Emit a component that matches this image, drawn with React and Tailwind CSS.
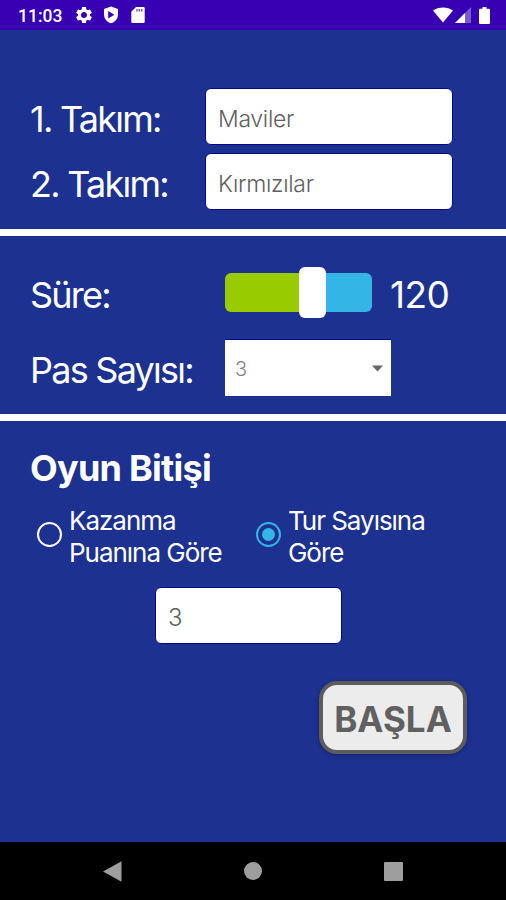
function StatusBar() {
  return (
    <header className="h-[30px] bg-[#3700b3] flex items-center justify-between pl-[18px] pr-[16px] text-white">
      <div className="flex items-center">
        <span className="w-[45px] font-['Roboto'] text-[17.5px] leading-[30px] font-medium whitespace-nowrap pt-[2px]">
          11:03
        </span>
        {/* Settings, play protect, sd card */}
        <svg className="ml-[11px] w-[20px] h-[20px]" viewBox="0 0 24 24" fill="currentColor">
          <path d="M19.14 12.94c.04-.3.06-.61.06-.94 0-.32-.02-.64-.07-.94l2.03-1.58a.49.49 0 0 0 .12-.61l-1.92-3.32a.49.49 0 0 0-.59-.22l-2.39.96c-.5-.38-1.03-.7-1.62-.94l-.36-2.54a.48.48 0 0 0-.48-.41h-3.84c-.24 0-.43.17-.47.41l-.36 2.54c-.59.24-1.13.57-1.62.94l-2.39-.96a.48.48 0 0 0-.59.22L2.74 8.87a.48.48 0 0 0 .12.61l2.03 1.58c-.05.3-.09.63-.09.94s.02.64.07.94l-2.03 1.58a.49.49 0 0 0-.12.61l1.92 3.32c.12.22.37.29.59.22l2.39-.96c.5.38 1.03.7 1.62.94l.36 2.54c.05.24.24.41.48.41h3.84c.24 0 .44-.17.47-.41l.36-2.54c.59-.24 1.13-.56 1.62-.94l2.39.96c.22.08.47 0 .59-.22l1.92-3.32a.48.48 0 0 0-.12-.61l-2.01-1.58zM12 15.6A3.61 3.61 0 0 1 8.4 12c0-1.98 1.62-3.6 3.6-3.6s3.6 1.62 3.6 3.6-1.62 3.6-3.6 3.6z" />
        </svg>
        <svg className="ml-[9px] w-[16px] h-[18px]" viewBox="0 0 16 18">
          <path d="M8 0.5l7 2.6v5.4c0 4.2-2.8 7.3-7 8.8-4.2-1.5-7-4.6-7-8.8V3.1z" fill="currentColor" />
          <path d="M5.2 5l6.2 3.7-6.2 3.7z" fill="#3700b3" />
        </svg>
        <svg className="ml-[12px] w-[14px] h-[16px]" viewBox="0 0 14 16">
          <path d="M5 0h7.5q1.2 0 1.2 1.2v13.6q0 1.2-1.2 1.2H1.5q-1.2 0-1.2-1.2V4.8z" fill="currentColor" />
          <path d="M5.2 2h1.4v2.500H5.2zM7.6 2H9v2.500H7.600zM10 2h1.4v2.500H10z" fill="#3700b3" opacity="0.7" />
        </svg>
      </div>
      {/* Wifi, signal, battery */}
      <div className="flex items-center">
        <svg className="w-[20px] h-[16px]" viewBox="0 0 20 16" fill="currentColor">
          <path d="M10 15.5L0 3.6C5.500-.6 14.500-.6 20 3.600z" />
        </svg>
        <svg className="ml-[2px] w-[16px] h-[16px]" viewBox="0 0 16 16" fill="currentColor">
          <path d="M0 16L16 0v16z" opacity="0.35" />
          <path d="M0 16L10 6V16z" />
        </svg>
        <svg className="ml-[8px] w-[11px] h-[17px]" viewBox="0 0 11 17" fill="currentColor">
          <path d="M3.5 0h4v1.800H10q1 0 1 1V16q0 1-1 1H1q-1 0-1-1V2.800q0-1 1-1h2.500z" />
        </svg>
      </div>
    </header>
  );
}

function TeamField({ label, name }) {
  return (
    <div className="flex items-center h-[57px]">
      <label className="w-[175px] text-[36px] font-normal tracking-[-1.75px] whitespace-nowrap pt-[4px]">
        {label}
      </label>
      <div className="w-[248px] h-[57px] rounded-[6px] bg-white text-[#606060] border border-[#06088a] flex items-center pl-[12px] pt-[5px] text-[23px] font-light tracking-[-0.3px]">
        {name}
      </div>
    </div>
  );
}

function Radio({ checked, children }) {
  return (
    <div className="flex items-start">
      <div
        className={`mt-[18px] w-[25px] h-[25px] shrink-0 rounded-full border-[2.5px] flex items-center justify-center ${
          checked ? "border-[#33b5e5]" : "border-white"
        }`}
      >
        {checked && <div className="w-[13px] h-[13px] rounded-full bg-[#33b5e5]" />}
      </div>
      <div className="ml-[7px] mt-px text-[26px] leading-[32px] tracking-[-1.03px] whitespace-nowrap">
        {children}
      </div>
    </div>
  );
}

function NavBar() {
  return (
    <nav className="h-[58px] bg-black flex items-center pl-[103px] text-[#9e9e9e]">
      <svg className="w-[19px] h-[21px]" viewBox="0 0 19 21" fill="currentColor">
        <path d="M18.5.3v20.400L0 10.500z" />
      </svg>
      <div className="ml-[122px] w-[18px] h-[18px] rounded-full bg-[#9e9e9e]" />
      <div className="ml-[122px] w-[19px] h-[19px] rounded-[1px] bg-[#9e9e9e]" />
    </nav>
  );
}

export default function App() {
  return (
    <div className="w-[506px] h-[900px] overflow-hidden flex flex-col bg-[#1d3190] text-white font-['Inter',sans-serif]">
      <StatusBar />

      {/* Teams */}
      <section className="h-[199px] pt-[58px] pl-[30px] flex flex-col gap-[8px]">
        <TeamField label="1. Takım:" name="Maviler" />
        <TeamField label="2. Takım:" name="Kırmızılar" />
      </section>
      <div className="h-[7px] shrink-0 bg-white" />

      {/* Round settings */}
      <section className="h-[178px] pt-[31px] pl-[30px]">
        <div className="flex items-center h-[51px]">
          <span className="w-[195px] text-[36px] tracking-[-1.8px] pt-[4px]">Süre:</span>
          <div className="flex items-center w-[147px]">
            <div className="w-[74px] h-[39px] rounded-l-[6px] bg-[#99cc00]" />
            <div className="w-[27px] h-[51px] rounded-[6px] bg-white" />
            <div className="w-[46px] h-[39px] rounded-r-[6px] bg-[#33b5e5]" />
          </div>
          <span className="ml-[18px] text-[37px] tracking-[-0.5px] pt-[4px]">120</span>
        </div>
        <div className="mt-[21px] flex items-center h-[57px]">
          <span className="w-[195px] text-[36px] tracking-[-1.75px] whitespace-nowrap pt-[4px]">
            Pas Sayısı:
          </span>
          <div className="w-[166px] h-[57px] bg-white border-t border-[#06088a] flex items-center justify-between pl-[10px] pr-[8px] text-[#808080]">
            <span className="text-[20px] font-light pt-[2px]">3</span>
            <svg className="w-[11px] h-[7px]" viewBox="0 0 11 7" fill="#666">
              <path d="M0 .5h11L5.500 6.500z" />
            </svg>
          </div>
        </div>
      </section>
      <div className="h-[7px] shrink-0 bg-white" />

      {/* End of game */}
      <section className="grow pt-[25px]">
        <h2 className="pl-[30px] text-[36px] leading-[44px] font-bold tracking-[-0.75px]">
          Oyun Bitişi
        </h2>
        <div className="mt-[14px] h-[64px] flex pl-[37px]">
          <div className="w-[219px] flex">
            <Radio>
              Kazanma
              <br />
              Puanına Göre
            </Radio>
          </div>
          <Radio checked>
            Tur Sayısına
            <br />
            Göre
          </Radio>
        </div>
        <div className="mt-[19px] ml-[155px] w-[187px] h-[57px] rounded-[6px] border border-[#06088a] bg-white text-[#606060] text-[24px] font-light flex items-center pl-[12px] pt-[4px]">
          3
        </div>
        <button className="mt-[37px] ml-[319px] w-[148px] h-[73px] rounded-[18px] border-[4px] border-[#5c5c5c] bg-[#ececec] text-[#606060] font-bold text-[35px] flex items-center justify-center pt-[3px] shadow-[0_1px_4px_rgba(0,0,0,0.3)]">
          BAŞLA
        </button>
      </section>

      <NavBar />
    </div>
  );
}
